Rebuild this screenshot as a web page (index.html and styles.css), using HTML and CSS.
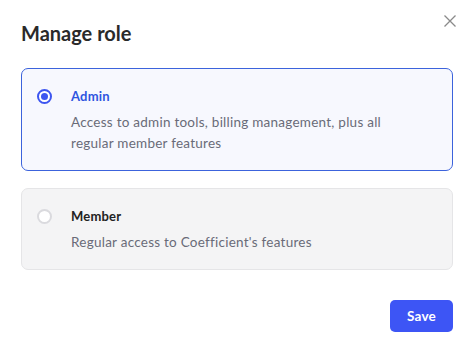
FILE: index.html
```html
<!DOCTYPE html>
<html>
<head>
<meta charset="utf-8">
<link rel="stylesheet" href="styles.css">
</head>
<body>
<div class="dialog">
  <button class="close" aria-label="Close">
    <svg width="12" height="12" viewBox="0 0 12 12"><path d="M0.5 0.5L11.5 11.5M11.5 0.5L0.5 11.5" stroke="#8a8a8a" stroke-width="1.3" fill="none"/></svg>
  </button>
  <h1 class="title">Manage role</h1>
  <div class="options">
    <label class="option selected">
      <span class="radio"><span class="dot"></span></span>
      <span class="body">
        <span class="name">Admin</span>
        <span class="desc">Access to admin tools, billing management, plus all regular member features</span>
      </span>
    </label>
    <label class="option">
      <span class="radio"></span>
      <span class="body">
        <span class="name">Member</span>
        <span class="desc">Regular access to Coefficient's features</span>
      </span>
    </label>
  </div>
  <div class="footer">
    <button class="save">Save</button>
  </div>
</div>
</body>
</html>
```
FILE: styles.css
```css
* { box-sizing: border-box; }
html, body { margin: 0; padding: 0; background: #fff; }
body { font-family: Lato, "Open Sans", sans-serif; color: #222; }
.dialog {
  position: relative;
  width: 475px;
  height: 340px;
  padding: 21px 22px 0 21px;
}
.close {
  position: absolute;
  top: 15px;
  right: 19px;
  width: 12px;
  height: 12px;
  padding: 0;
  border: 0;
  background: none;
  display: block;
}
.close svg { display: block; }
.title {
  margin: 0;
  font-size: 20px;
  line-height: 24px;
  font-weight: 700;
  color: #2a2a2a;
}
.options {
  margin-top: 23px;
  display: flex;
  flex-direction: column;
  gap: 17px;
}
.option {
  display: flex;
  align-items: flex-start;
  gap: 19px;
  padding: 17px 15px 16px 15px;
  border: 1px solid #e5e5e7;
  border-radius: 7px;
  background: #f4f4f5;
}
.option.selected {
  border-color: #3c63dc;
  background: #f7f8fe;
}
.radio {
  flex: none;
  width: 15px;
  height: 15px;
  margin-top: 3px;
  border-radius: 50%;
  border: 2px solid #dadade;
  background: #fff;
  display: flex;
  align-items: center;
  justify-content: center;
}
.selected .radio {
  border: 2px solid #3d55f0;
}
.dot {
  width: 7px;
  height: 7px;
  border-radius: 50%;
  background: #3d55f0;
}
.body { display: flex; flex-direction: column; gap: 6px; }
.name {
  font-size: 13px;
  line-height: 20px;
  font-weight: 700;
  color: #222;
  letter-spacing: 0.2px;
}
.selected .name { color: #2f55e0; }
.desc {
  font-size: 13.5px;
  line-height: 21px;
  letter-spacing: 0.25px;
  color: #696b78;
  max-width: 330px;
}
.footer {
  display: flex;
  justify-content: flex-end;
  margin-top: 30px;
}
.save {
  width: 63px;
  height: 32px;
  border: 0;
  border-radius: 5px;
  background: #3d55f5;
  color: #fff;
  font-family: Lato, "Open Sans", sans-serif;
  font-weight: 700;
  font-size: 13.5px;
  letter-spacing: 0.2px;
  padding: 0;
}
```
